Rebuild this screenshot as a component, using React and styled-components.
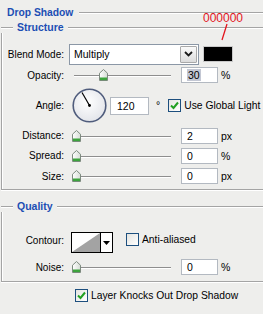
import React from "react";
import styled, { createGlobalStyle } from "styled-components";

const GlobalStyle = createGlobalStyle`
  html, body { margin: 0; padding: 0; }
  body {
    background: #eeeeec;
    font-family: "Liberation Sans", Arial, sans-serif;
    font-size: 10px;
    color: #000;
    overflow: hidden;
  }
`;

const Panel = styled.div`
  position: relative;
  width: 263px;
  height: 314px;
  padding-top: 6px;
  box-sizing: border-box;
  overflow: hidden;
`;

const Rule = styled.div`
  flex: ${(p) => (p.$w ? `0 0 ${p.$w}px` : "1 1 auto")};
  height: 1px;
  background: #a4a4a4;
  box-shadow: 0 1px 0 #ffffff;
`;

const TitleRow = styled.div`
  display: flex;
  align-items: center;
  height: 12px;
  padding-left: 7px;
`;

const TitleText = styled.span`
  font-weight: bold;
  font-size: 10.3px;
  color: #1c4eb4;
  padding-right: 6px;
  white-space: nowrap;
`;

const GroupHeader = styled.div`
  display: flex;
  align-items: center;
  height: 12px;
  margin: ${(p) => p.$mt}px 0 0 1px;
`;

const GroupTitle = styled.span`
  font-weight: bold;
  font-size: 10.5px;
  color: #1c4eb4;
  padding: 0 4px;
  white-space: nowrap;
`;

const GroupBody = styled.div`
  margin-left: 1px;
  border-left: 1px solid #a4a4a4;
  border-bottom: 1px solid #a4a4a4;
  box-shadow: inset 1px 0 0 #ffffff, 0 1px 0 #ffffff;
  padding: ${(p) => p.$pt}px 0 ${(p) => p.$pb}px 0;
`;

const Row = styled.div`
  display: flex;
  align-items: ${(p) => p.$align || "center"};
  height: ${(p) => p.$h}px;
  padding-left: ${(p) => p.$pl || 0}px;
  margin-top: ${(p) => p.$mt || 0}px;
`;

const Label = styled.span`
  flex: 0 0 62px;
  text-align: right;
  white-space: nowrap;
  padding-top: ${(p) => p.$pt || 0}px;
`;

const Select = styled.div`
  display: flex;
  align-items: stretch;
  box-sizing: border-box;
  width: 130px;
  height: 21px;
  margin-left: 5px;
  background: #fff;
  border: 1px solid #8b97a6;
`;

const SelectText = styled.span`
  flex: 1;
  display: flex;
  align-items: center;
  padding-left: 4px;
  font-size: 10.5px;
`;

const SelectButton = styled.span`
  flex: 0 0 15px;
  margin: 1px;
  display: flex;
  align-items: center;
  justify-content: center;
  border: 1px solid #a9a9a9;
  border-radius: 1px;
  background: linear-gradient(#fafafa, #dcdcdc);
`;

const Swatch = styled.div`
  width: 30px;
  height: 16px;
  box-sizing: border-box;
  margin-left: 4px;
  background: #000;
  border: 1px solid #c9c9c9;
`;

const SliderBox = styled.div`
  position: relative;
  width: 101px;
  height: 12px;
  margin-left: 6px;
  &::before {
    content: "";
    position: absolute;
    left: 4px;
    right: 0;
    top: 6px;
    height: 1px;
    background: #8e8e8e;
    box-shadow: 0 1px 0 #ffffff;
  }
`;

const ThumbWrap = styled.span`
  position: absolute;
  top: 0;
  width: 9px;
  height: 12px;
  display: block;
`;

const NumInput = styled.div`
  box-sizing: border-box;
  width: ${(p) => p.$w || 37}px;
  height: ${(p) => p.$h || 16}px;
  margin-left: ${(p) => p.$ml}px;
  background: #fff;
  border: 1px solid #b3b9c1;
  display: flex;
  align-items: center;
  padding-left: ${(p) => p.$pl || 5}px;
  font-size: 10.5px;
`;

const Selected = styled.span`
  background: #c3c7d3;
  padding: 0 1px;
`;

const Unit = styled.span`
  margin-left: ${(p) => p.$ml || 3}px;
  font-size: 10.5px;
`;

const Degree = styled.span`
  margin-left: 7px;
  align-self: flex-start;
  margin-top: 14px;
  font-size: 10.5px;
`;

const DialWrap = styled.div`
  width: 35px;
  height: 35px;
  margin-left: 8px;
`;

const CheckLabel = styled.label`
  display: flex;
  align-items: center;
  margin-left: ${(p) => p.$ml || 0}px;
  margin-top: ${(p) => p.$mt || 0}px;
  white-space: nowrap;
`;

const CheckBox = styled.span`
  box-sizing: border-box;
  width: 13px;
  height: 13px;
  border: 1px solid #1d4f7e;
  background: linear-gradient(135deg, #e4e4e0, #ffffff);
  display: flex;
  align-items: center;
  justify-content: center;
  margin-right: 3px;
`;

const CheckText = styled.span`
  font-size: 10.3px;
`;

const Contour = styled.div`
  display: flex;
  margin-left: 7px;
`;

const ContourPreview = styled.div`
  box-sizing: border-box;
  width: 30px;
  height: 21px;
  border: 1px solid #000;
  background: #fff;
`;

const ContourArrow = styled.div`
  box-sizing: border-box;
  width: 12px;
  height: 21px;
  border: 1px solid #000;
  border-left: none;
  background: #fff;
  display: flex;
  align-items: center;
  justify-content: center;
`;

const Note = styled.div`
  position: absolute;
  left: 203px;
  top: 11px;
  color: #e3141c;
  font-size: 12px;
  line-height: 14px;
`;

const NoteLine = styled.svg`
  position: absolute;
  left: 219px;
  top: 23px;
`;

function Thumb({ pct }) {
  return (
    <ThumbWrap style={{ left: `${Math.round(2 + pct * 90)}px` }}>
      <svg width="9" height="12" viewBox="0 0 9 12">
        <defs>
          <linearGradient id="tg" x1="0" y1="0" x2="1" y2="0">
            <stop offset="0" stopColor="#ffffff" />
            <stop offset="1" stopColor="#d5dcd5" />
          </linearGradient>
        </defs>
        <path d="M4.5 0.5 L8.5 4.2 L8.5 11.5 L0.5 11.5 L0.5 4.2 Z" fill="url(#tg)" stroke="#7d8a7f" />
        <rect x="1" y="8.5" width="7" height="2.6" fill="#3da43d" />
      </svg>
    </ThumbWrap>
  );
}

function Slider({ pct }) {
  return (
    <SliderBox>
      <Thumb pct={pct} />
    </SliderBox>
  );
}

function Check({ checked, children, ml, mt }) {
  return (
    <CheckLabel $ml={ml} $mt={mt}>
      <CheckBox>
        {checked && (
          <svg width="9" height="9" viewBox="0 0 9 9">
            <path d="M1 4.5 L3.5 7 L8 1.5" fill="none" stroke="#22a022" strokeWidth="2" />
          </svg>
        )}
      </CheckBox>
      <CheckText>{children}</CheckText>
    </CheckLabel>
  );
}

function Dial() {
  return (
    <DialWrap>
      <svg width="35" height="35" viewBox="0 0 35 35">
        <defs>
          <radialGradient id="dg" cx="0.45" cy="0.4" r="0.6">
            <stop offset="0" stopColor="#ffffff" />
            <stop offset="1" stopColor="#e3e5ea" />
          </radialGradient>
        </defs>
        <circle cx="17.5" cy="17.5" r="16.3" fill="url(#dg)" stroke="#4f5c7c" strokeWidth="1.6" />
        <line x1="17.5" y1="17.5" x2="10" y2="4.5" stroke="#000" strokeWidth="1.2" />
        <circle cx="17.5" cy="17.5" r="1.4" fill="#000" />
      </svg>
    </DialWrap>
  );
}

function SliderRow({ label, pct, value, unit, h, selected }) {
  return (
    <Row $h={h}>
      <Label>{label}</Label>
      <Slider pct={pct} />
      <NumInput $ml={10}>{selected ? <Selected>{value}</Selected> : value}</NumInput>
      <Unit $ml={3}>{unit}</Unit>
    </Row>
  );
}

export default function App() {
  return (
    <Panel>
      <GlobalStyle />
      <TitleRow>
        <TitleText>Drop Shadow</TitleText>
        <Rule />
      </TitleRow>

      <GroupHeader $mt={3}>
        <Rule $w={12} />
        <GroupTitle>Structure</GroupTitle>
        <Rule />
      </GroupHeader>
      <GroupBody $pt={10} $pb={3}>
        <Row $h={22}>
          <Label>Blend Mode:</Label>
          <Select>
            <SelectText>Multiply</SelectText>
            <SelectButton>
              <svg width="9" height="6" viewBox="0 0 9 6">
                <path d="M1 1 L4.5 4.5 L8 1" fill="none" stroke="#1a1a1a" strokeWidth="1.8" />
              </svg>
            </SelectButton>
          </Select>
          <Swatch />
        </Row>
        <SliderRow h={20} label="Opacity:" pct={0.3} value="30" unit="%" selected />
        <Row $h={41}>
          <Label>Angle:</Label>
          <Dial />
          <NumInput $ml={3} $w={39} $h={18} $pl={6}>120</NumInput>
          <Degree>°</Degree>
          <Check checked ml={8}>Use Global Light</Check>
        </Row>
        <SliderRow h={19} label="Distance:" pct={0} value="2" unit="px" />
        <SliderRow h={21} label="Spread:" pct={0} value="0" unit="%" />
        <SliderRow h={20} label="Size:" pct={0} value="0" unit="px" />
      </GroupBody>

      <GroupHeader $mt={10}>
        <Rule $w={12} />
        <GroupTitle>Quality</GroupTitle>
        <Rule />
      </GroupHeader>
      <GroupBody $pt={20} $pb={4}>
        <Row $h={25} $align="flex-start">
          <Label $pt={3}>Contour:</Label>
          <Contour>
            <ContourPreview>
              <svg width="28" height="19" viewBox="0 0 28 19">
                <polygon points="0,19 28,0 28,19" fill="#a3a3a3" />
              </svg>
            </ContourPreview>
            <ContourArrow>
              <svg width="7" height="4" viewBox="0 0 7 4">
                <polygon points="0,0 7,0 3.5,4" fill="#000" />
              </svg>
            </ContourArrow>
          </Contour>
          <Check ml={13} mt={1}>Anti-aliased</Check>
        </Row>
        <SliderRow h={20} label="Noise:" pct={0} value="0" unit="%" />
      </GroupBody>

      <Row $h={14} $pl={75} $mt={6}>
        <Check checked>Layer Knocks Out Drop Shadow</Check>
      </Row>

      <Note>000000</Note>
      <NoteLine width="12" height="19" viewBox="0 0 12 19">
        <line x1="8" y1="1" x2="3" y2="17" stroke="#e3141c" strokeWidth="1.3" />
      </NoteLine>
    </Panel>
  );
}
